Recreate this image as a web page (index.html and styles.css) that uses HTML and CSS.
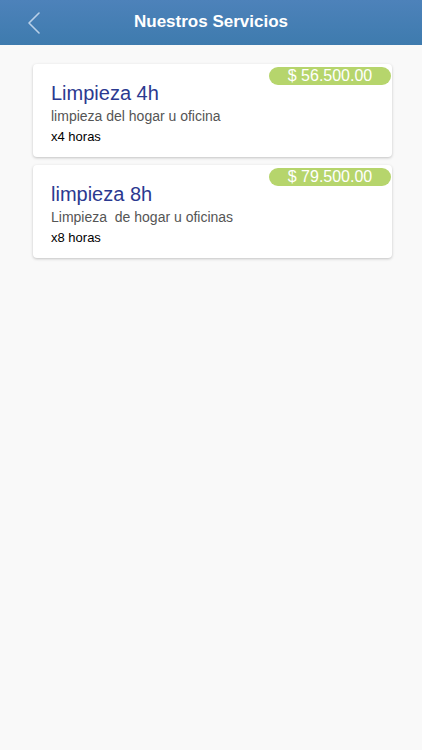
FILE: index.html
```html
<!DOCTYPE html>
<html lang="es">
<head>
    <meta charset="UTF-8">
    <meta name="viewport" content="width=device-width, initial-scale=1.0">
    <title>Nuestros Servicios</title>
    <link rel="stylesheet" href="styles.css">
</head>
<body>

    <!-- Barra superior -->
    <header class="barra">
        <a class="volver" href="#">
            <svg width="13" height="22" viewBox="0 0 13 22">
                <path d="M12 1 L2 11 L12 21" fill="none" stroke="#b9d0e8" stroke-width="1.6" stroke-linecap="round" stroke-linejoin="round"/>
            </svg>
        </a>
        <h1 class="titulo">Nuestros Servicios</h1>
    </header>

    <!-- Lista de servicios -->
    <main class="lista">
        <div class="servicio">
            <span class="precio">$ 56.500.00</span>
            <h2 class="nombre">Limpieza 4h</h2>
            <p class="descripcion">limpieza del hogar u oficina</p>
            <p class="horas">x4 horas</p>
        </div>

        <div class="servicio">
            <span class="precio">$ 79.500.00</span>
            <h2 class="nombre">limpieza 8h</h2>
            <p class="descripcion">Limpieza&nbsp; de hogar u oficinas</p>
            <p class="horas">x8 horas</p>
        </div>
    </main>

</body>
</html>
```

FILE: styles.css
```css
body {
    font-family: 'Liberation Sans', Arial, sans-serif;
    background-color: #f9f9f9;
    margin: 0;
    height: 100vh;
}

.barra {
    position: relative;
    height: 45px;
    background: linear-gradient(#4d82ba, #3e7bae);
    display: flex;
    align-items: center;
    justify-content: center;
}

.volver {
    position: absolute;
    left: 27px;
    top: 12px;
    display: block;
    line-height: 0;
}

.titulo {
    margin: 0;
    color: #fff;
    font-size: 17px;
    font-weight: bold;
    padding-bottom: 1px;
}

.lista {
    display: flex;
    flex-direction: column;
    gap: 8px;
    padding: 19px 30px 0 33px;
}

/* Tarjeta de cada servicio */
.servicio {
    position: relative;
    background-color: #fff;
    border-radius: 4px;
    box-shadow: 0 1px 3px rgba(0, 0, 0, 0.22);
    padding: 17px 18px 12px 18px;
}

.precio {
    position: absolute;
    top: 3px;
    right: 1px;
    width: 122px;
    height: 18px;
    line-height: 18px;
    border-radius: 9px;
    background-color: #b6d56c;
    color: #fff;
    font-size: 16px;
    text-align: center;
}

.nombre {
    margin: 0;
    font-size: 20px;
    line-height: 24px;
    font-weight: normal;
    color: #2b3990;
}

.descripcion {
    margin: 2px 0 0;
    font-size: 14px;
    line-height: 18px;
    color: #555;
}

.horas {
    margin: 3px 0 0;
    font-size: 13px;
    line-height: 17px;
    color: #000;
}
```
